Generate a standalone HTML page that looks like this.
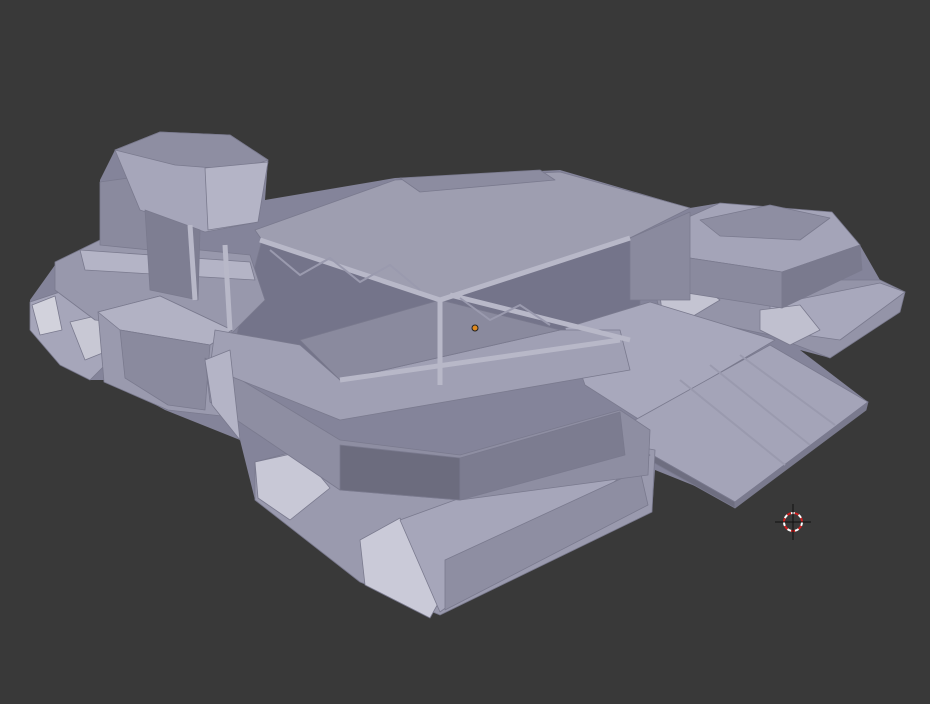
<!DOCTYPE html>
<html><head><meta charset="utf-8"><style>
html,body{margin:0;padding:0;background:#393939;width:930px;height:704px;overflow:hidden}
svg{display:block}
</style></head><body>
<svg width="930" height="704" viewBox="0 0 930 704" xmlns="http://www.w3.org/2000/svg">
<rect width="930" height="704" fill="#393939"/>
<polygon points="30,300 55,265 100,240 100,180 115,150 160,132 230,135 268,160 265,200 395,178 560,170 690,208 720,203 832,212 860,245 880,280 905,292 900,312 830,358 800,350 868,402 735,502 655,470 652,512 440,615 360,582 345,520 300,530 255,500 240,440 165,410 110,380 90,380 60,365 30,330" fill="#84849a"/>
<g stroke="#7a7a8e" stroke-width="0.8" stroke-linejoin="round">
<!-- right tracks -->
<polygon points="655,292 700,280 880,280 905,292 900,312 830,358 770,335 660,312" fill="#9494a8"/>
<polygon points="770,305 880,283 905,292 840,340 770,330" fill="#a8a8bc"/>
<polygon points="660,295 700,285 720,300 690,318 662,312" fill="#c4c4d2"/>
<polygon points="760,310 800,305 820,330 790,345 760,330" fill="#c0c0cf"/>
<!-- right module -->
<polygon points="648,235 720,203 832,212 860,245 782,272 650,252" fill="#a4a4b8"/>
<polygon points="650,252 782,272 782,308 655,288" fill="#8a8a9e"/>
<polygon points="782,272 860,245 862,270 782,308" fill="#7a7a8e"/>
<polygon points="700,220 770,205 830,218 800,240 720,236" fill="#8e8ea2"/>
<!-- central inner shaded -->
<polygon points="262,240 445,300 640,230 640,330 570,330 340,420 230,360" fill="#74748a"/>
<!-- main deck -->
<polygon points="255,230 395,180 560,172 690,208 630,238 445,300 262,240" fill="#9e9eb0"/>
<polygon points="400,178 540,170 555,180 420,192" fill="#8c8ca0"/>
<polygon points="630,238 690,212 690,300 630,300" fill="#8a8a9e"/>
<!-- left frame & tracks -->
<polygon points="30,302 60,292 110,300 110,360 90,380 60,365 30,330" fill="#a6a6ba"/>
<polygon points="32,305 55,296 62,330 40,335" fill="#d2d2dc"/>
<polygon points="70,322 100,315 110,350 85,360" fill="#c8c8d4"/>
<polygon points="55,262 100,240 250,255 265,300 230,335 95,320 55,290" fill="#9898ac"/>
<polygon points="80,250 250,262 255,280 85,270" fill="#b4b4c6"/>
<!-- tower -->
<polygon points="100,182 150,175 150,250 100,245" fill="#8a8a9e"/>
<polygon points="115,150 160,132 230,135 268,160 258,222 205,232 140,210" fill="#a6a6ba"/>
<polygon points="115,150 160,132 230,135 268,160 240,170 175,165" fill="#8e8ea2"/>
<polygon points="205,168 268,162 258,222 208,230" fill="#b4b4c6"/>
<polygon points="145,210 200,230 198,300 150,290" fill="#7e7e92"/>
<!-- left cab -->
<polygon points="98,312 160,296 232,330 222,416 168,410 104,382" fill="#9a9aae"/>
<polygon points="98,312 160,296 232,330 210,345 120,330" fill="#b2b2c4"/>
<polygon points="120,330 210,345 205,410 168,405 125,378" fill="#8a8a9e"/>
<!-- flat plate -->
<polygon points="565,328 650,302 775,340 640,420 585,385" fill="#a8a8bc"/>
<!-- ramp -->
<polygon points="635,420 770,345 868,402 735,502 640,448" fill="#a4a4b8"/>
<polygon points="640,448 735,502 735,508 640,455" fill="#6e6e80"/>
<polygon points="735,502 868,402 866,410 735,508" fill="#7a7a8e"/>
<!-- front tracks -->
<polygon points="255,462 300,450 360,490 600,440 655,450 652,512 440,615 360,582 255,500" fill="#9a9aae"/>
<polygon points="255,462 300,452 330,488 290,520 258,498" fill="#c8c8d6"/>
<polygon points="360,540 400,518 440,600 430,618 365,585" fill="#cacad8"/>
<polygon points="400,520 620,440 650,455 440,612" fill="#a6a6ba"/>
<polygon points="445,560 640,470 648,505 445,610" fill="#8e8ea2"/>
<!-- lower body -->
<polygon points="205,358 340,440 460,455 620,410 650,430 648,475 460,500 340,490 210,402" fill="#8e8ea2"/>
<polygon points="340,445 460,458 460,500 340,490" fill="#6c6c7e"/>
<polygon points="460,458 620,412 625,455 460,500" fill="#7c7c90"/>
<polygon points="215,330 300,345 340,380 560,330 620,330 630,370 340,420 210,368" fill="#a0a0b4"/>
<polygon points="205,360 230,350 240,440 212,405" fill="#b4b4c6"/>
<polygon points="300,340 440,300 560,330 340,380" fill="#8a8a9e"/>
</g>
<!-- railings -->
<g stroke="#b8b8c8" stroke-width="5" fill="none">
<polyline points="260,240 440,300 630,238"/>
<polyline points="440,300 440,385"/>
<polyline points="340,380 620,340"/>
<polyline points="450,295 550,320 630,340"/>
<polyline points="225,245 230,330"/>
<polyline points="190,225 195,300"/>
</g>
<g stroke="#9a9aae" stroke-width="2" fill="none">
<polyline points="270,250 300,275 330,258 360,282 390,265 420,290"/>
<polyline points="460,298 490,320 520,305 550,325"/>
<line x1="680" y1="380" x2="785" y2="465"/>
<line x1="710" y1="365" x2="810" y2="445"/>
<line x1="740" y1="355" x2="835" y2="425"/>
</g>
<circle cx="475" cy="328" r="3" fill="#e08a20" stroke="#222" stroke-width="1"/>
<g>
<circle cx="793" cy="522" r="9" fill="none" stroke="#fff" stroke-width="2" stroke-dasharray="4 4"/>
<circle cx="793" cy="522" r="9" fill="none" stroke="#d02020" stroke-width="2" stroke-dasharray="4 4" stroke-dashoffset="4"/>
<line x1="775" y1="522" x2="811" y2="522" stroke="#111" stroke-width="1"/>
<line x1="793" y1="504" x2="793" y2="540" stroke="#111" stroke-width="1"/>
</g>
</svg>
</body></html>
